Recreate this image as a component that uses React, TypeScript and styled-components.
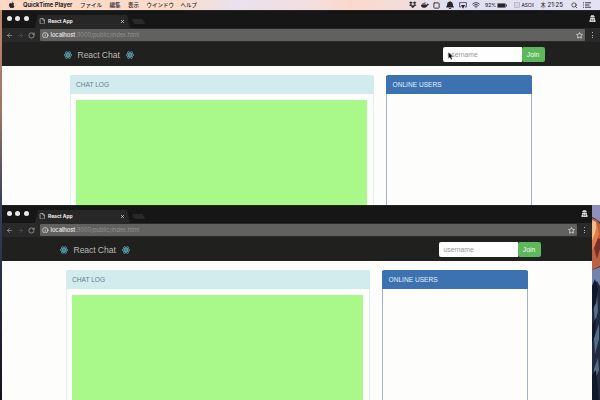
import React from "react";
import styled, { createGlobalStyle } from "styled-components";
import { FaApple, FaDropbox, FaDocker, FaBell, FaReact, FaUserSecret } from "react-icons/fa";
import { ArrowLeft, ArrowRight, RotateCw, File, Star, Search, Wifi, Square, X, Info } from "lucide-react";

const Global = createGlobalStyle`
  * { box-sizing: border-box; }
  html, body { margin: 0; padding: 0; }
  body { width: 600px; height: 400px; overflow: hidden; background: #14151f; }
`;

const Desktop = styled.div`
  position: relative;
  width: 600px;
  height: 400px;
  overflow: hidden;
  display: flex;
  flex-direction: column;
  font-family: Inter, "Liberation Sans", "Noto Sans CJK JP", sans-serif;
`;

const Wallpaper = styled.svg`
  position: absolute;
  inset: 0;
`;

const MenuBar = styled.header`
  position: relative;
  height: 10px;
  flex: none;
  display: flex;
  align-items: center;
  justify-content: space-between;
  padding: 0 9px 0 8px;
  font-size: 6px;
  line-height: 10px;
  color: #2b2528;
  background: linear-gradient(90deg, #fbd9c4 0, #fbdccb 180px, #e9e2ee 235px, #f4dfdf 310px, #fbd8cc 350px, #f6dcd8 395px, #dfe0f2 450px, #e4e2f2 100%);
  svg { display: block; flex: none; }
`;

const MenuGroup = styled.div`
  display: flex;
  align-items: center;
  white-space: nowrap;
`;

const MenuText = styled.span<{ $w: number; $bold?: boolean; $size?: number }>`
  width: ${(p) => p.$w}px;
  flex: none;
  font-weight: ${(p) => (p.$bold ? 700 : 500)};
  font-size: ${(p) => p.$size ?? 6}px;
`;

const MenuIcon = styled.span<{ $w: number }>`
  width: ${(p) => p.$w}px;
  flex: none;
  display: flex;
`;

const Win = styled.section<{ $w: number }>`
  position: relative;
  flex: none;
  width: ${(p) => p.$w}px;
  height: 195px;
  margin-left: 2px;
  overflow: hidden;
  background: #fdfdfb;
`;

const TabStrip = styled.div`
  height: 18px;
  display: flex;
  align-items: flex-end;
  background: #161616;
  border-top: 1px solid #242424;
`;

const Lights = styled.div`
  display: flex;
  gap: 3.4px;
  padding: 0 0 7px 5px;
  width: 33px;
`;

const Light = styled.i`
  width: 5px;
  height: 5px;
  border-radius: 50%;
  background: #e9e9e7;
`;

const Tab = styled.div`
  width: 95px;
  height: 13px;
  display: flex;
  align-items: center;
  padding: 0 5px 1px 4px;
  color: #ededed;
  font-size: 4.9px;
  font-weight: 700;
  background: #272727;
  clip-path: polygon(3px 0, 92px 0, 100% 100%, 0 100%);
  span { flex: 1; padding-left: 2.5px; }
`;

const NewTab = styled.i`
  width: 11px;
  height: 5px;
  margin: 0 0 4px 3px;
  border-radius: 1px;
  background: #292929;
  transform: skewX(25deg);
`;

const Incognito = styled.div`
  margin: 0 4px 6px auto;
  color: #d5d5d2;
  svg { display: block; }
`;

const Toolbar = styled.div`
  height: 15px;
  display: flex;
  align-items: center;
  padding: 1px 6px 1px 4px;
  background: #292929;
  border-bottom: 1px solid #202020;
  svg { display: block; flex: none; }
`;

const NavIcons = styled.div`
  width: 34px;
  display: flex;
  gap: 4px;
  color: #a9a9a9;
  svg:nth-child(2) { color: #505050; }
`;

const Address = styled.div`
  flex: 1;
  height: 12px;
  display: flex;
  align-items: center;
  padding: 0 2px;
  border-radius: 1px;
  color: #92928c;
  background: #61615f;
  font-size: 5.8px;
  line-height: 12px;
  b { color: #eeeeec; font-weight: 500; }
  span { flex: 1; padding-left: 2px; letter-spacing: -0.06px; }
`;

const Kebab = styled.div`
  width: 2px;
  margin-left: 7px;
  display: flex;
  flex-direction: column;
  gap: 1.5px;
  i { width: 1px; height: 1px; background: #b5b5b5; }
`;

const Navbar = styled.nav<{ $pad: number }>`
  height: 23px;
  display: flex;
  align-items: center;
  justify-content: space-between;
  padding: 0 ${(p) => p.$pad + 1}px 0 ${(p) => p.$pad}px;
  background: #20201f;
`;

const Brand = styled.div`
  display: flex;
  align-items: center;
  gap: 6px;
  padding-left: 7px;
  color: #b9b9b5;
  font: 8.6px/12px "Liberation Sans", Arial, sans-serif;
  span { width: 42px; letter-spacing: -0.08px; white-space: nowrap; }
  svg { color: #68bccb; display: block; stroke: #68bccb; stroke-width: 18px; }
`;

const JoinForm = styled.div`
  display: flex;
  height: 15px;
  font: 6.8px/15px "Liberation Sans", Arial, sans-serif;
`;

const Field = styled.div`
  width: 79px;
  padding-left: 5px;
  border-radius: 2px 0 0 2px;
  background: #fefefe;
  color: #999997;
`;

const Join = styled.div`
  width: 23px;
  text-align: center;
  border-radius: 2px;
  background: #5eb65d;
  color: #f3fff0;
`;

const Columns = styled.main<{ $left: number }>`
  display: flex;
  align-items: flex-start;
  gap: 12px;
  padding: 9px 0 0 ${(p) => p.$left}px;
`;

const Panel = styled.div<{ $w: number; $primary?: boolean }>`
  width: ${(p) => p.$w}px;
  height: 190px;
  border: 1px solid ${(p) => (p.$primary ? "#9fb2cc" : "#dff1f5")};
  border-top-color: ${(p) => (p.$primary ? "#3b70ac" : "#d2ebed")};
  border-radius: 2px;
`;

const Heading = styled.div<{ $primary?: boolean }>`
  height: 18px;
  margin: 0 -1px;
  padding-left: ${(p) => (p.$primary ? 6.5 : 6)}px;
  font: 6.6px/18px "Liberation Sans", Arial, sans-serif;
  color: ${(p) => (p.$primary ? "#e4f0fc" : "#5b8190")};
  background: ${(p) => (p.$primary ? "#3d72b0" : "#d2ebed")};
`;

const ChatBody = styled.div`
  height: 160px;
  margin: 6px 6px 0 5px;
  background: #a8f989;
`;

const Cursor = styled.svg`
  position: absolute;
  left: 448px;
  top: 52px;
`;

interface BrowserProps {
  width: number;
  pad: number;
  left: number;
}

function BrowserWindow({ width, pad, left }: BrowserProps) {
  return (
    <Win $w={width}>
      <TabStrip>
        <Lights><Light /><Light /><Light /></Lights>
        <Tab>
          <File size={6.5} strokeWidth={2} />
          <span>React App</span>
          <X size={5} strokeWidth={3} />
        </Tab>
        <NewTab />
        <Incognito><FaUserSecret size={7} /></Incognito>
      </TabStrip>
      <Toolbar>
        <NavIcons>
          <ArrowLeft size={7} strokeWidth={2.3} />
          <ArrowRight size={7} strokeWidth={2.3} />
          <RotateCw size={7} strokeWidth={2.5} />
        </NavIcons>
        <Address>
          <Info size={6.5} strokeWidth={2.7} color="#e2e2df" />
          <span><b>localhost</b>:3000/public/index.html</span>
          <Star size={7} strokeWidth={2.7} color="#e8e8e4" />
        </Address>
        <Kebab><i /><i /><i /></Kebab>
      </Toolbar>
      <Navbar $pad={pad}>
        <Brand>
          <FaReact size={8} />
          <span>React Chat</span>
          <FaReact size={8} />
        </Brand>
        <JoinForm>
          <Field>username</Field>
          <Join>Join</Join>
        </JoinForm>
      </Navbar>
      <Columns $left={left}>
        <Panel $w={304}>
          <Heading>CHAT LOG</Heading>
          <ChatBody />
        </Panel>
        <Panel $w={146} $primary>
          <Heading $primary>ONLINE USERS</Heading>
        </Panel>
      </Columns>
    </Win>
  );
}

export default function App() {
  return (
    <>
      <Global />
      <Desktop>
        <Wallpaper width="600" height="400">
          <defs>
            <linearGradient id="edge" x1="0" y1="0" x2="0" y2="1">
              <stop offset="0" stopColor="#c88868" />
              <stop offset=".28" stopColor="#9d7568" />
              <stop offset=".5" stopColor="#394260" />
              <stop offset="1" stopColor="#15121a" />
            </linearGradient>
          </defs>
          <rect width="3" height="400" fill="url(#edge)" />
          <rect x="592" y="205" width="8" height="195" fill="#222b42" />
          <path d="M592 205h8v17l-4-3-4-2z" fill="#8e91bd" />
          <path d="M592 218l5 2 3 4v42l-8 4z" fill="#bc6240" />
          <path d="M592 220l4 2 1 9-5 10z" fill="#f0bc8c" />
          <path d="M597 224l2 10-4 12-3 4v-9l3-8z" fill="#e57b42" />
          <path d="M594 248l4-10 2 1v10l-3 10z" fill="#75302e" />
          <path d="M592 270l8-3v19l-3-5-5 5z" fill="#7582ab" />
          <path d="M593 300l4-9 1 20-3 12z M594 338l5-14v15l-4 15z M594 369l4-11 1 12-4 10z" fill="#547087" />
          <path d="M592 286l3-7 3 10-2 14-4 8z M592 325l4-7-1 18-3 6z M592 375l4-5 3 30h-7z" fill="#10182c" />
        </Wallpaper>
        <MenuBar>
          <MenuGroup>
            <MenuIcon $w={15}><FaApple size={7.5} /></MenuIcon>
            <MenuText $w={57} $bold $size={5.8}>QuickTime Player</MenuText>
            <MenuText $w={29.5} $size={5.5}>ファイル</MenuText>
            <MenuText $w={18.5} $size={5.5}>編集</MenuText>
            <MenuText $w={18.5} $size={5.5}>表示</MenuText>
            <MenuText $w={34} $size={5.5}>ウインドウ</MenuText>
            <MenuText $w={20} $size={5.5}>ヘルプ</MenuText>
          </MenuGroup>
          <MenuGroup>
            <MenuIcon $w={12}><FaDropbox size={7.5} /></MenuIcon>
            <MenuIcon $w={12}><FaDocker size={8} /></MenuIcon>
            <MenuIcon $w={12.5}><Square size={7} strokeWidth={3} /></MenuIcon>
            <MenuIcon $w={13.5}>
              <FaBell size={8} preserveAspectRatio="none" />
            </MenuIcon>
            <MenuIcon $w={13}>
              <svg width="8" height="7" viewBox="0 0 8 7"><path d="M2 5H.6V.6h6.8V5H6" fill="none" stroke="#3a3438" strokeWidth=".8" /><path d="M1.8 3h4.4L4 6.8z" fill="#2b2528" /></svg>
            </MenuIcon>
            <MenuIcon $w={13}><Wifi size={8} strokeWidth={2.5} /></MenuIcon>
            <MenuText $w={12} $size={5}>92%</MenuText>
            <MenuIcon $w={16.5}>
              <svg width="10" height="5" viewBox="0 0 10 5"><rect x=".4" y=".4" width="8.2" height="4.2" rx=".8" fill="none" stroke="#3a3438" strokeWidth=".7" /><path d="M1 1h7v3H1zM9 1.5h.8v2H9z" fill="#2b2528" /></svg>
            </MenuIcon>
            <MenuIcon $w={8}>
              <svg width="6" height="6" viewBox="0 0 6 6"><rect x=".5" y=".5" width="5" height="5" fill="#d3d2df" stroke="#a5a3b3" strokeWidth=".5" /></svg>
            </MenuIcon>
            <MenuText $w={19} $size={4.7}>ASCII</MenuText>
            <MenuText $w={7} $size={5.2}>木</MenuText>
            <MenuText $w={23} $size={6}>21:25</MenuText>
            <MenuIcon $w={12.5}><Search size={6.5} strokeWidth={2.6} /></MenuIcon>
            <MenuIcon $w={8}>
              <svg width="8" height="6" viewBox="0 0 8 6"><path d="M0 .8h1M0 3h1M0 5.2h1M2 .8h6M2 3h4.5M2 5.2h6" stroke="#2b2528" strokeWidth=".9" /></svg>
            </MenuIcon>
          </MenuGroup>
        </MenuBar>
        <BrowserWindow width={598} pad={54.5} left={68} />
        <BrowserWindow width={590} pad={50.5} left={64} />
        <Cursor width="6" height="8" viewBox="0 0 6 8">
          <path d="M.4.3v6.2l1.5-1.3 1 2.4 1.3-.6-1-2.3h2z" fill="#090909" stroke="#ddd" strokeWidth=".3" />
        </Cursor>
      </Desktop>
    </>
  );
}
